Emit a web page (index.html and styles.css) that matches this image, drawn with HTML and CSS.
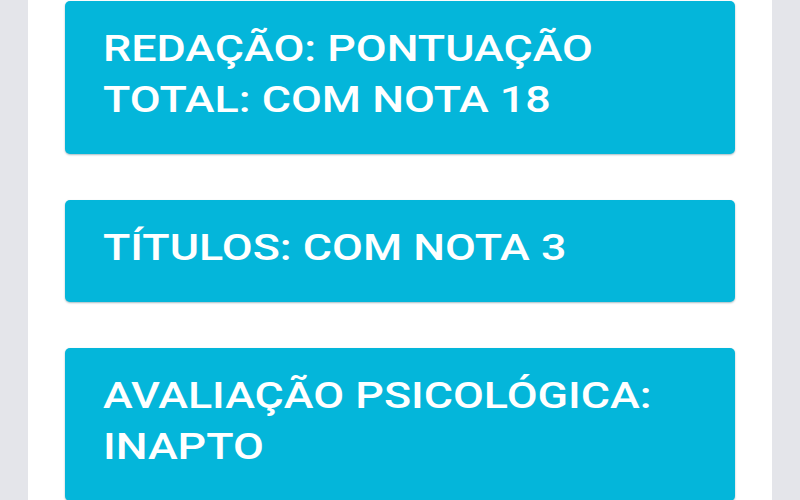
FILE: index.html
```html
<!DOCTYPE html>
<html lang="pt">
<head>
<meta charset="utf-8">
<link rel="stylesheet" href="styles.css">
</head>
<body>
<main class="panel">
  <div class="card"><span class="label">REDAÇÃO: PONTUAÇÃO<br>TOTAL: COM NOTA 18</span></div>
  <div class="card"><span class="label">TÍTULOS: COM NOTA 3</span></div>
  <div class="card"><span class="label">AVALIAÇÃO PSICOLÓGICA:<br>INAPTO</span></div>
</main>
</body>
</html>
```

FILE: styles.css
```css
html, body {
  margin: 0;
  height: 100%;
  overflow: hidden;
}
body {
  background: #e4e5ea;
}
.panel {
  margin: 0 28px;
  min-height: 100%;
  background: #ffffff;
  padding: 1px 37px 0;
  box-sizing: border-box;
  display: flex;
  flex-direction: column;
  gap: 46px;
}
.card {
  background: #04b6da;
  color: #ffffff;
  border-radius: 5px;
  box-shadow: 0 1px 2px rgba(0, 60, 80, 0.35);
  font-family: Roboto, "Noto Sans", sans-serif;
  font-weight: 500;
  font-size: 36px;
  line-height: 51px;
  padding: 23px 38px 28px;
}
.label {
  display: inline-block;
  transform: scaleX(1.245);
  transform-origin: left center;
  white-space: nowrap;
}
```
